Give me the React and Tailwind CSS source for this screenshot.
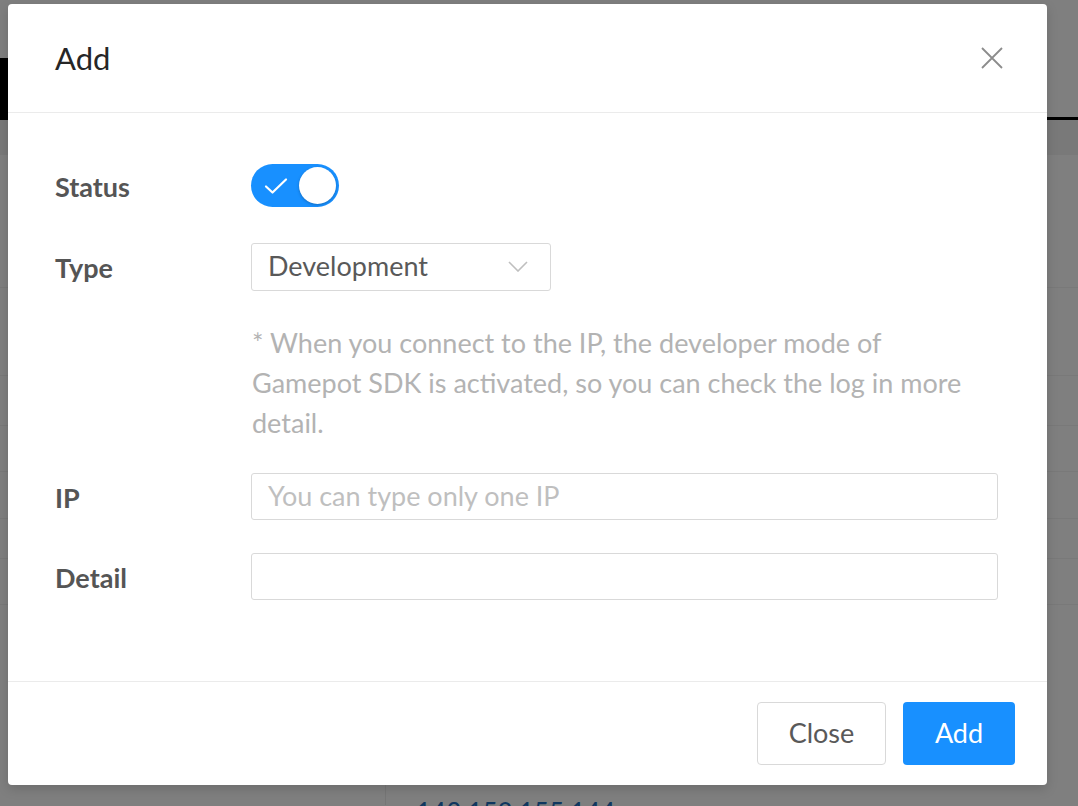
import React from "react";

const font = { fontFamily: "Lato, 'Noto Sans', sans-serif" };

function Toggle() {
  return (
    <div className="relative w-[88px] h-[43px] rounded-full bg-[#1890ff]">
      <svg className="absolute left-[13px] top-[13px]" width="24" height="18" viewBox="0 0 24 18" fill="none">
        <path d="M2 9.5 L8.5 15.5 L22 2.5" stroke="white" strokeWidth="2.2" strokeLinecap="round" strokeLinejoin="round" />
      </svg>
      <div className="absolute right-[3px] top-[3px] w-[37px] h-[37px] rounded-full bg-white shadow-[0_1px_3px_rgba(0,0,0,0.25)]" />
    </div>
  );
}

function Row({ label, children, className = "" }) {
  return (
    <div className={`flex items-center ${className}`}>
      <div className="w-[196px] shrink-0 pt-[4px] text-[27px] font-bold text-[#555555]">{label}</div>
      <div className="flex-1">{children}</div>
    </div>
  );
}

export default function App() {
  return (
    <div className="relative w-[1078px] h-[806px] overflow-hidden bg-white" style={font}>
      {/* page behind the mask */}
      <div className="absolute inset-0">
        <div className="h-[58px]" />
        <div className="flex h-[62px]">
          <div className="w-[8px] bg-black" />
          <div className="flex-1 border-b-[3px] border-black" />
        </div>
        <div className="h-[35px] bg-[#f3f3f3]" />
        <div className="border-b border-[#f2f2f2] h-[133px]" />
        <div className="border-b border-[#f2f2f2] h-[88px]" />
        <div className="border-b border-[#f2f2f2] h-[50px]" />
        <div className="border-b border-[#f2f2f2] h-[46px]" />
        <div className="border-b border-[#f2f2f2] h-[47px]" />
        <div className="border-b border-[#f2f2f2] h-[40px]" />
        <div className="border-b border-[#f2f2f2] h-[46px]" />
        <div className="flex h-[200px]">
          <div className="w-[386px] border-r border-[#ececec]" />
          <div className="pl-[30px] pt-[194px] text-[26px] leading-none text-[#1f6fbf]">143.152.155.144</div>
        </div>
      </div>
      <div className="absolute inset-0 bg-black/50" />

      {/* modal */}
      <div className="absolute left-[8px] top-[4px] w-[1039px] h-[781px] bg-white rounded-[4px] shadow-[0_4px_12px_rgba(0,0,0,0.15)] flex flex-col">
        <div className="h-[109px] shrink-0 flex items-center justify-between pl-[47px] pr-[44px] border-b border-[#ebebeb]">
          <span className="text-[31px] text-[#262626] pt-[1px]">Add</span>
          <svg width="22" height="22" viewBox="0 0 22 22" fill="none">
            <path d="M1 1 L21 21 M21 1 L1 21" stroke="#8c8c8c" strokeWidth="1.8" />
          </svg>
        </div>

        <div className="flex-1 pl-[47px] pr-[49px] pt-[50px]">
          <Row label="Status">
            <Toggle />
          </Row>
          <Row label="Type" className="mt-[35px]">
            <div className="w-[300px] h-[48px] border border-[#d9d9d9] rounded-[3px] flex items-center justify-between pl-[16px] pr-[22px]">
              <span className="text-[27px] text-[#595959]">Development</span>
              <svg width="20" height="11" viewBox="0 0 20 11" fill="none">
                <path d="M1 1 L10 10 L19 1" stroke="#bfbfbf" strokeWidth="1.6" />
              </svg>
            </div>
          </Row>
          <div className="ml-[197px] w-[735px] mt-[32px] text-[27px] leading-[40px] text-[#b3b3b3]">
            * When you connect to the IP, the developer mode of Gamepot SDK is activated, so you can check the log in more detail.
          </div>
          <Row label="IP" className="mt-[30px]">
            <div className="h-[47px] border border-[#d9d9d9] rounded-[3px] flex items-center pl-[16px] text-[27px] text-[#bfbfbf]">
              You can type only one IP
            </div>
          </Row>
          <Row label="Detail" className="mt-[33px]">
            <div className="h-[47px] border border-[#d9d9d9] rounded-[3px]" />
          </Row>
        </div>

        <div className="h-[104px] shrink-0 border-t border-[#ebebeb] flex items-center justify-end gap-[17px] pr-[32px]">
          <button className="w-[129px] h-[63px] border border-[#d9d9d9] rounded-[4px] bg-white text-[27px] text-[#595959]">Close</button>
          <button className="w-[112px] h-[63px] rounded-[4px] bg-[#1890ff] text-[27px] text-white">Add</button>
        </div>
      </div>
    </div>
  );
}
